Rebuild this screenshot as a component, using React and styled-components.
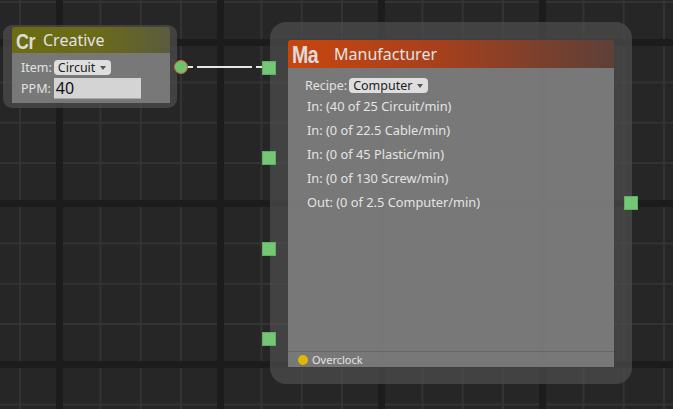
import React from 'react';
import styled, { createGlobalStyle } from 'styled-components';

const GlobalStyle = createGlobalStyle`
  html, body {
    margin: 0;
    padding: 0;
    background: #262626;
    overflow: hidden;
  }
`;

const Canvas = styled.div`
  position: relative;
  width: 673px;
  height: 409px;
  overflow: hidden;
  font-family: 'Noto Sans', 'Open Sans', sans-serif;
  background-color: #262626;
  background-image:
    linear-gradient(to right, #1c1c1c 7px, transparent 7px),
    linear-gradient(to bottom, #1c1c1c 7px, transparent 7px),
    linear-gradient(to right, #333 2px, transparent 2px),
    linear-gradient(to bottom, #333 2px, transparent 2px);
  background-size: 161px 100%, 100% 161px, 40.25px 100%, 100% 40.25px;
  background-position: 56px 0, 0 39px, 19px 0, 0 1px;
`;

const Node = styled.div`
  position: absolute;
  left: ${(p) => p.x}px;
  top: ${(p) => p.y}px;
  width: ${(p) => p.w}px;
  height: ${(p) => p.h}px;
  box-sizing: border-box;
  padding: ${(p) => p.pad};
  background: rgba(78, 78, 78, 0.72);
  border-radius: ${(p) => p.radius}px;
  display: flex;
  flex-direction: column;
`;

const Header = styled.div`
  height: ${(p) => p.h}px;
  flex: none;
  display: flex;
  align-items: center;
  gap: ${(p) => p.gap}px;
  padding-left: 4px;
  border-radius: 3px 3px 0 0;
  background: ${(p) => p.bg};
`;

const Badge = styled.span`
  display: inline-block;
  width: ${(p) => p.w}px;
  white-space: nowrap;
  font-family: 'Liberation Sans', 'DejaVu Sans', sans-serif;
  font-weight: 700;
  font-size: ${(p) => p.size}px;
  color: #dcdcdc;
  letter-spacing: -0.5px;
  line-height: 1;
  transform-origin: left center;
  transform: scale(0.85, 1.08);
`;

const Title = styled.span`
  font-size: 16px;
  color: #e2e2e2;
  line-height: 1;
`;

const Body = styled.div`
  flex: 1;
  background: rgba(128, 128, 128, 0.88);
  display: flex;
  flex-direction: column;
  padding: ${(p) => p.pad};
  color: #e4e4e4;
  font-size: 12px;
`;

const Row = styled.div`
  display: flex;
  align-items: center;
  gap: ${(p) => p.gap || 2}px;
  height: ${(p) => p.h}px;
  padding-left: ${(p) => p.indent || 0}px;
`;

const Label = styled.span`
  font-size: 12.5px;
  color: #e2e2e2;
`;

const Select = styled.span`
  display: inline-flex;
  align-items: center;
  gap: 5px;
  height: 15px;
  padding: 0 5px 0 4px;
  background: #dedede;
  border-radius: 4px;
  color: #222;
  font-size: 12.5px;
  &::after {
    content: '';
    border-left: 3.5px solid transparent;
    border-right: 3.5px solid transparent;
    border-top: 4px solid #555;
    margin-top: 1px;
  }
`;

const Input = styled.span`
  display: inline-flex;
  align-items: center;
  width: 87px;
  height: 21px;
  box-sizing: border-box;
  padding-left: 2px;
  background: #d4d4d4;
  border-bottom: 1px solid #a8a8a8;
  color: #111;
  font-size: 16px;
`;

const Stat = styled.div`
  height: 24px;
  display: flex;
  align-items: center;
  padding-left: 19px;
  font-size: 12.8px;
  color: #e4e4e4;
`;

const Spacer = styled.div`
  flex: 1;
`;

const Footer = styled.div`
  height: 15px;
  border-top: 1px solid #666;
  display: flex;
  align-items: center;
  gap: 4px;
  padding-left: 10px;
  font-size: 11px;
  color: #e4e4e4;
`;

const Led = styled.span`
  width: 10px;
  height: 10px;
  border-radius: 50%;
  background: #dcb800;
`;

const Port = styled.div`
  position: absolute;
  left: ${(p) => p.x}px;
  top: ${(p) => p.y}px;
  width: 14px;
  height: 14px;
  box-sizing: border-box;
  background: #74c774;
  border: 1px solid #62ae62;
`;

const OutPin = styled.div`
  position: absolute;
  left: 174px;
  top: 60px;
  width: 14px;
  height: 14px;
  box-sizing: border-box;
  border-radius: 50%;
  background: #6fc270;
  border: 1.5px solid #e0603c;
`;

const Wire = styled.svg`
  position: absolute;
  left: 186px;
  top: 62px;
  overflow: visible;
`;

export default function App() {
  const stats = [
    'In: (40 of 25 Circuit/min)',
    'In: (0 of 22.5 Cable/min)',
    'In: (0 of 45 Plastic/min)',
    'In: (0 of 130 Screw/min)',
    'Out: (0 of 2.5 Computer/min)',
  ];
  return (
    <Canvas>
      <GlobalStyle />

      <Node x={3} y={25} w={174} h={83} pad="2px 7px 5px 9px" radius={9}>
        <Header h={26} gap={7} bg="linear-gradient(to right, #6c6c10, #6a6a1a 55%, #5b5b40)">
          <Badge w={20} size={21}>Cr</Badge>
          <Title>Creative</Title>
        </Header>
        <Body pad="6px 0 0 9px">
          <Row h={17}>
            <Label>Item:</Label>
            <Select>Circuit</Select>
          </Row>
          <Row h={24} gap={3}>
            <Label>PPM:</Label>
            <Input>40</Input>
          </Row>
        </Body>
      </Node>

      <Node x={270} y={22} w={362} h={362} pad="18px 18px 17px 18px" radius={16}>
        <Header h={28} gap={16} bg="linear-gradient(to right, #c8460e, #a8401c 45%, #5c4038)">
          <Badge w={26} size={23}>Ma</Badge>
          <Title>Manufacturer</Title>
        </Header>
        <Body pad="8px 0 0 0">
          <Row h={18} indent={17}>
            <Label>Recipe:</Label>
            <Select>Computer</Select>
          </Row>
          {stats.map((s, i) => (
            <Stat key={i}>{s}</Stat>
          ))}
          <Spacer />
          <Footer>
            <Led />
            Overclock
          </Footer>
        </Body>
      </Node>

      <Wire width="80" height="10">
        <path d="M2 5 H7 M11 5 H66 M70 5 H76" stroke="#e6e6e6" strokeWidth="2" fill="none" />
      </Wire>
      <OutPin />

      <Port x={262} y={61} />
      <Port x={262} y={151} />
      <Port x={262} y={242} />
      <Port x={262} y={332} />
      <Port x={624} y={196} />
    </Canvas>
  );
}
